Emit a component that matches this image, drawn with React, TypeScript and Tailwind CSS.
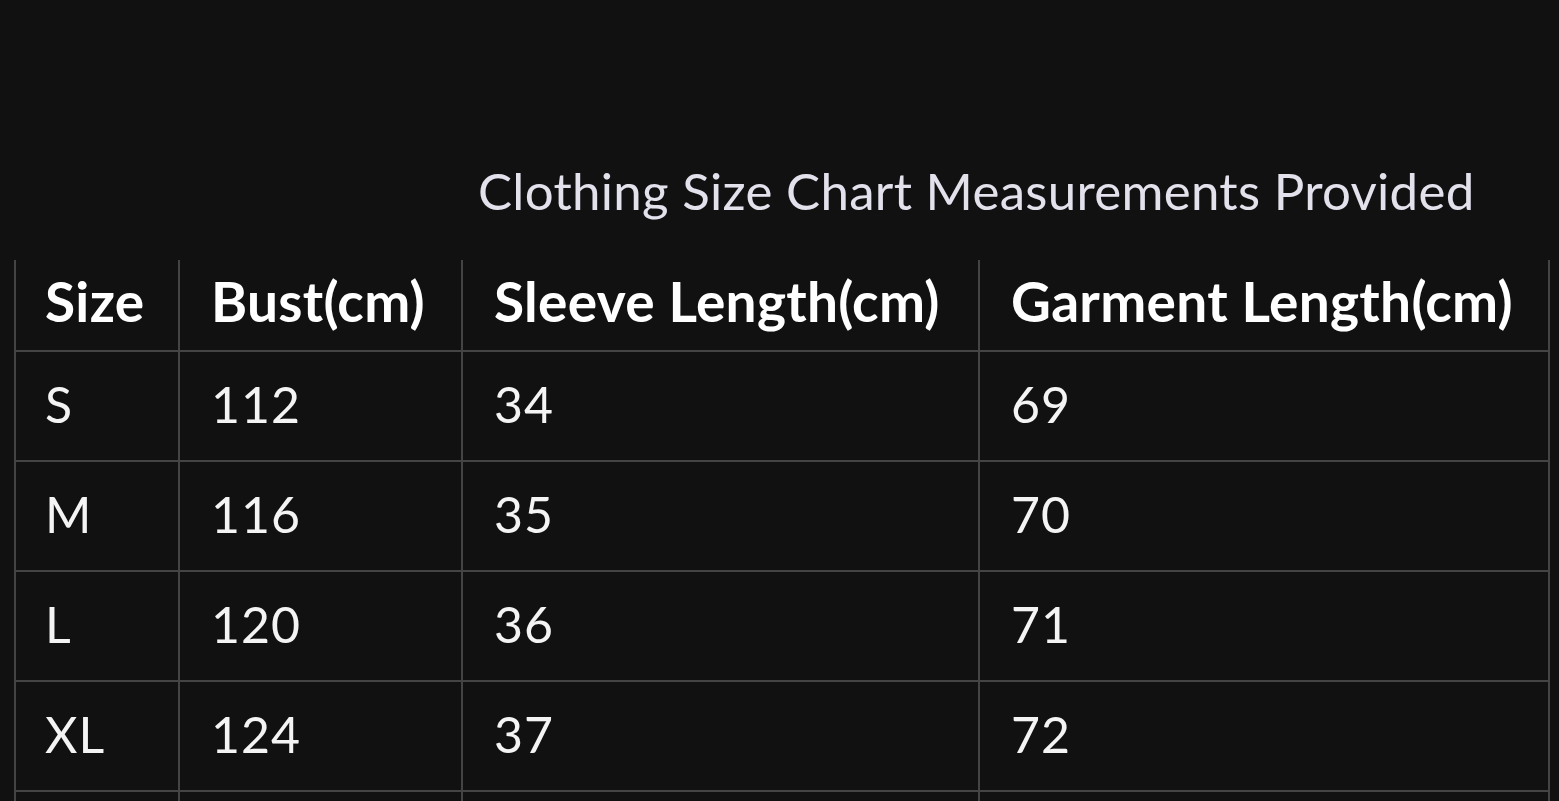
const rows = [
  { size: 'S', bust: '112', sleeve: '34', garment: '69' },
  { size: 'M', bust: '116', sleeve: '35', garment: '70' },
  { size: 'L', bust: '120', sleeve: '36', garment: '71' },
  { size: 'XL', bust: '124', sleeve: '37', garment: '72' },
  { size: 'XXL', bust: '128', sleeve: '38', garment: '73' },
];

const cols = 'grid grid-cols-[162px_283px_517px_570px]';

export default function App() {
  return (
    <div className="h-screen bg-[#111111] overflow-hidden font-['Lato',sans-serif] text-white">
      <h1 className="pt-[158px] pl-[478px] text-[51px] leading-[66px] text-[#e2e1ec] tracking-[0.3px]">
        Clothing Size Chart Measurements Provided
      </h1>

      <div className="mt-[36px] ml-[14px] w-[1536px] border-l-2 border-r-2 border-[#444]">
        {/* Header */}
        <div className={`${cols} h-[92px] border-b-2 border-[#444] font-bold text-[55px] tracking-[0.3px]`}>
          <div className="pl-[29px] pb-[18px] flex items-center">Size</div>
          <div className="pl-[31px] pb-[18px] flex items-center border-l-2 border-[#444]">Bust(cm)</div>
          <div className="pl-[31px] pb-[18px] flex items-center border-l-2 border-[#444]">Sleeve Length(cm)</div>
          <div className="pl-[31px] pb-[18px] flex items-center border-l-2 border-[#444]">Garment Length(cm)</div>
        </div>

        {rows.map((r) => (
          <div key={r.size} className={`${cols} h-[110px] border-b-2 border-[#444] text-[50px] tracking-[1px] text-[#f4f4f4]`}>
            <div className="pl-[29px] pb-[4px] flex items-center">{r.size}</div>
            <div className="pl-[31px] pb-[4px] flex items-center border-l-2 border-[#444]">{r.bust}</div>
            <div className="pl-[31px] pb-[4px] flex items-center border-l-2 border-[#444]">{r.sleeve}</div>
            <div className="pl-[31px] pb-[4px] flex items-center border-l-2 border-[#444]">{r.garment}</div>
          </div>
        ))}
      </div>
    </div>
  );
}
